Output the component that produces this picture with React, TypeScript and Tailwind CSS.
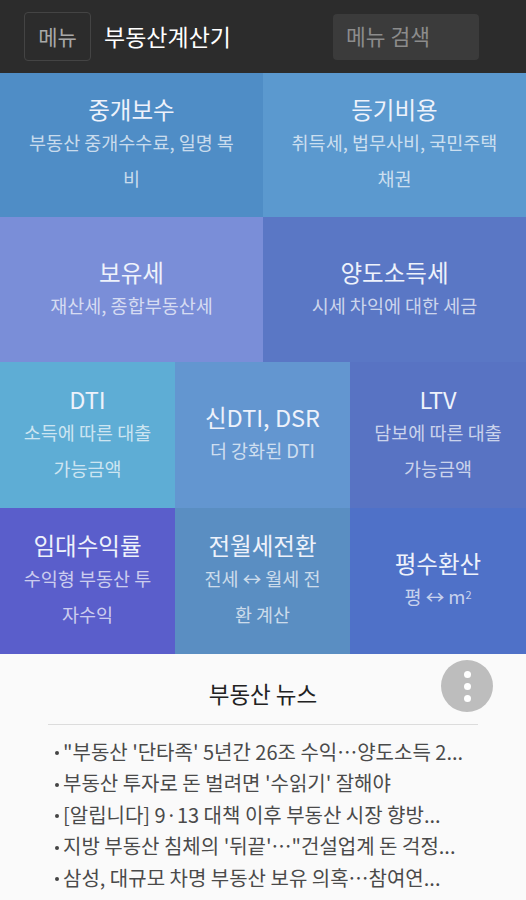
import React from "react";

const font = { fontFamily: '"Noto Sans CJK KR", "Noto Sans", sans-serif' };

function Tile({ bg, title, sub, w }: { bg: string; title: React.ReactNode; sub: React.ReactNode; w: string }) {
  return (
    <div className={`${bg} ${w} h-full flex flex-col items-center justify-center text-center px-3`}>
      <div className="text-[23.5px] leading-[30px] text-[#eef2fb]">{title}</div>
      <div className="text-[18.5px] leading-[36px] text-white/70 whitespace-nowrap">{sub}</div>
    </div>
  );
}

export default function App() {
  const news = [
    "\"부동산 '단타족' 5년간 26조 수익…양도소득 2...",
    "부동산 투자로 돈 벌려면 '수읽기' 잘해야",
    "[알립니다] 9·13 대책 이후 부동산 시장 향방...",
    "지방 부동산 침체의 '뒤끝'…\"건설업계 돈 걱정...",
    "삼성, 대규모 차명 부동산 보유 의혹…참여연...",
  ];
  return (
    <div style={font} className="w-[526px] h-[900px] overflow-hidden bg-[#fafafa]">
      <div className="h-[73px] bg-[#2c2c2c] flex items-center pl-6 pr-[47px]">
        <div className="w-[67px] h-[49px] border border-[#444] rounded flex items-center justify-center text-[21px] text-[#a8a8a8]">메뉴</div>
        <div className="ml-[13px] text-[23px] text-white">부동산계산기</div>
        <div className="ml-auto w-[146px] h-[46px] bg-[#3b3b3b] rounded flex items-center pl-[13px] text-[21.5px] text-[#8c8c8c]">메뉴 검색</div>
      </div>
      <div className="flex h-[144px]">
        <Tile bg="bg-[#4f8dc6]" w="w-[263px]" title="중개보수" sub={<>부동산 중개수수료, 일명 복<br />비</>} />
        <Tile bg="bg-[#5b99cf]" w="w-[263px]" title="등기비용" sub={<>취득세, 법무사비, 국민주택<br />채권</>} />
      </div>
      <div className="flex h-[145px]">
        <Tile bg="bg-[#7a8ed8]" w="w-[263px]" title="보유세" sub="재산세, 종합부동산세" />
        <Tile bg="bg-[#5a77c5]" w="w-[263px]" title="양도소득세" sub="시세 차익에 대한 세금" />
      </div>
      <div className="flex h-[146px]">
        <Tile bg="bg-[#5eadd5]" w="w-[175px]" title="DTI" sub={<>소득에 따른 대출<br />가능금액</>} />
        <Tile bg="bg-[#6396d0]" w="w-[175px]" title="신DTI, DSR" sub="더 강화된 DTI" />
        <Tile bg="bg-[#5873c3]" w="w-[176px]" title="LTV" sub={<>담보에 따른 대출<br />가능금액</>} />
      </div>
      <div className="flex h-[146px]">
        <Tile bg="bg-[#5a5ecb]" w="w-[175px]" title="임대수익률" sub={<>수익형 부동산 투<br />자수익</>} />
        <Tile bg="bg-[#5a8ec2]" w="w-[175px]" title="전월세전환" sub={<>전세 ↔ 월세 전<br />환 계산</>} />
        <Tile bg="bg-[#4f71c8]" w="w-[176px]" title="평수환산" sub={<>평 ↔ m<sup className="text-[11px]">2</sup></>} />
      </div>
      <div className="relative px-12 pt-[24px]">
        <div className="text-center text-[22.5px] leading-[30px] text-[#222] pb-[16px] border-b border-[#dcdcdc]">부동산 뉴스</div>
        <div className="absolute right-[33px] top-[6px] w-[52px] h-[52px] rounded-full bg-[#bdbdbd] flex flex-col items-center justify-center gap-[5px]">
          <span className="w-[7px] h-[7px] rounded-full bg-white" />
          <span className="w-[7px] h-[7px] rounded-full bg-white" />
          <span className="w-[7px] h-[7px] rounded-full bg-white" />
        </div>
        <ul className="pt-[11px] pl-[7px]">
          {news.map((n) => (
            <li key={n} className="flex items-center h-[31.5px] text-[20px] text-[#4a4a4a] whitespace-nowrap overflow-hidden">
              <span className="w-[4px] h-[4px] rounded-full bg-[#444] mr-[4px] mt-[3px] shrink-0" />
              <span>{n}</span>
            </li>
          ))}
        </ul>
      </div>
    </div>
  );
}
